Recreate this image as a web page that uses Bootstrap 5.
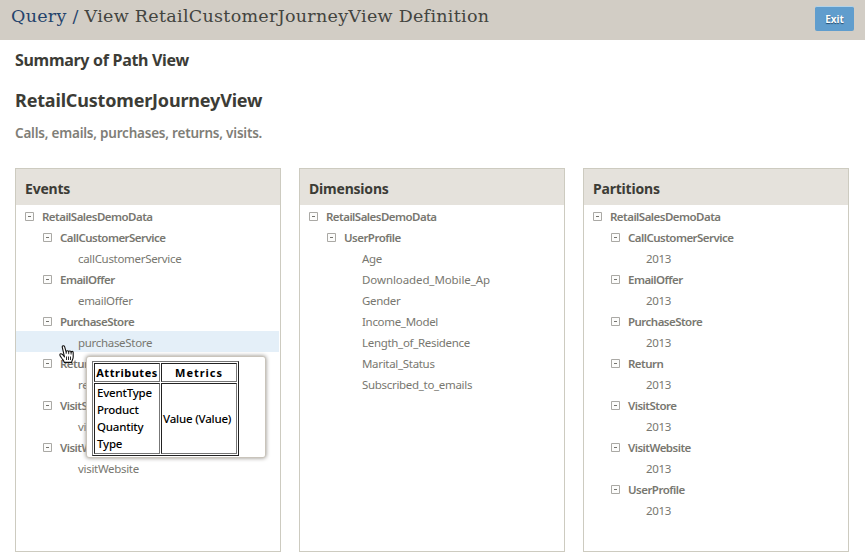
<!DOCTYPE html>
<html lang="en">
<head>
<meta charset="utf-8">
<meta name="viewport" content="width=device-width, initial-scale=1">
<title>View RetailCustomerJourneyView Definition</title>
<link href="https://cdn.jsdelivr.net/npm/bootstrap@5.3.0/dist/css/bootstrap.min.css" rel="stylesheet">
<style>
body{font-family:"Noto Sans","Open Sans",sans-serif;color:#3c3c36;overflow:hidden}
.topbar{height:40px;background:#d2cdc5;padding:0 11px}
.crumb-title{font:400 17.5px/32px "DejaVu Serif",serif;letter-spacing:.29px;color:#43443f;white-space:nowrap}
.crumb-title a,.crumb-title .sep{color:#24436c}
.btn-exit{width:39px;height:25px;margin-top:6px;padding:0;border:0;border-radius:2px;background:#609dcd;border-top:1px solid #b4d3e8;color:#fff;font-size:10px;line-height:23px;font-weight:700;letter-spacing:-.1px;text-shadow:0 1px 1px #244a6b}
.btn-exit:hover{background:#4f8cbc;color:#fff}
.page-body{padding:0 16px 0 15px}
.summary{font-size:16px;line-height:20px;font-weight:700;letter-spacing:-.3px;padding-top:10px}
.view-name{font-size:18px;line-height:24px;font-weight:700;letter-spacing:-.18px;padding-top:18px}
.view-desc{font-size:13.5px;line-height:20px;font-weight:600;letter-spacing:-.22px;color:#7f7e77;padding-top:11px;margin-bottom:25px}
.panels{gap:18px}
.panel{flex:0 0 266px;height:384px;border:1px solid #cdcbc0;border-radius:0}
.panel-head{height:36px;line-height:40px;background:#e5e2dc;border:0;border-radius:0!important;padding:0 9px;font-size:14px;font-weight:700;letter-spacing:-.2px}
.tree-row{height:21px;line-height:24px;font-size:11.5px;color:#787770;white-space:nowrap;padding-left:62px;letter-spacing:-.31px;margin-right:1px}
.tree-row.l0,.tree-row.l1{font-weight:600;letter-spacing:-.53px}
.tree-row.l0{padding-left:9px}
.tree-row.l1{padding-left:27px}
.tree-row.wide-text{letter-spacing:-.09px}
.tree-row.hovered{background:#e4eff8}
.toggle{width:9px;height:9px;margin:7px 8px 0 0;flex:none}
.tip{left:70px;top:187px;width:180px;height:102px;background:#fff;border:1px solid #c9c4bb;border-radius:3px;box-shadow:0 0 4px 0 #8f8b84;padding:4px 0 0 5px;z-index:2;color:#000}
.tip table{width:147px;height:94px;border:1px solid #777;border-right-color:#222;border-bottom-color:#222;border-collapse:separate;border-spacing:1px;table-layout:fixed}
.tip th,.tip td{border:1px solid #222;border-right-color:#777;border-bottom-color:#777;font-size:11.5px;line-height:17px;padding:0}
.tip th{height:19px;text-align:center;letter-spacing:.95px;font-size:11px;font-weight:700;white-space:nowrap}
.tip th:first-child{width:66px;letter-spacing:.52px}
.tip td{font-weight:500;letter-spacing:-.2px;padding:0 0 1px 2px;vertical-align:middle;white-space:nowrap}
.tip td+td{padding-left:1px}
.hand{left:43px;top:176px;width:16px;height:18px;z-index:3}
</style>
</head>
<body class="bg-white">
<svg class="d-none">
<symbol id="minus" viewBox="0 0 9 9"><path d="M.5.5h8v8h-8z" fill="#fcfcfb" stroke="#aaa9a5"/><path d="M3 4.5h3" stroke="#75746f"/></symbol>
</svg>
<header class="topbar d-flex justify-content-between align-items-start">
<h1 class="crumb-title m-0"><a class="text-decoration-none" href="#">Query</a> <span class="sep">/</span> View RetailCustomerJourneyView Definition</h1>
<button class="btn btn-exit" type="button">Exit</button>
</header>
<main class="page-body">
<h2 class="summary m-0">Summary of Path View</h2>
<h3 class="view-name m-0">RetailCustomerJourneyView</h3>
<p class="view-desc">Calls, emails, purchases, returns, visits.</p>
<div class="panels d-flex">
<section class="card panel">
<div class="card-header panel-head">Events</div>
<div class="tree-row l0 d-flex"><svg class="toggle"><use href="#minus"/></svg>RetailSalesDemoData</div>
<div class="tree-row l1 d-flex"><svg class="toggle"><use href="#minus"/></svg>CallCustomerService</div>
<div class="tree-row">callCustomerService</div>
<div class="tree-row l1 d-flex"><svg class="toggle"><use href="#minus"/></svg>EmailOffer</div>
<div class="tree-row">emailOffer</div>
<div class="tree-row l1 d-flex"><svg class="toggle"><use href="#minus"/></svg>PurchaseStore</div>
<div class="tree-row hovered">purchaseStore</div>
<div class="tree-row l1 d-flex"><svg class="toggle"><use href="#minus"/></svg>Return</div>
<div class="tree-row">return</div>
<div class="tree-row l1 d-flex"><svg class="toggle"><use href="#minus"/></svg>VisitStore</div>
<div class="tree-row">visitStore</div>
<div class="tree-row l1 d-flex"><svg class="toggle"><use href="#minus"/></svg>VisitWebsite</div>
<div class="tree-row">visitWebsite</div>
<div class="tip position-absolute">
<table>
<tr><th>Attributes</th><th>Metrics</th></tr>
<tr><td>EventType<br>Product<br>Quantity<br>Type</td><td>Value (Value)</td></tr>
</table>
</div>
<svg class="hand position-absolute" viewBox="0 0 16 18"><path d="M5.500 12 3.500 9.500C2.300 8.300.8 8.600.8 9.900c.2 1.200 1.500 2.500 2.500 4.100.8 1.200 1.700 1.800 1.900 3.400h7.500c0-1.800 1.500-3 1.500-5.400V7.500c0-1.500-2-1.500-2.100-.1 0-1.900-2.400-1.900-2.400-.3 0-1.800-2.500-1.700-2.600-.2L5.600 1.700C5 .1 2.900.7 3.300 2.300z" fill="#fff" stroke="#111" stroke-width="1.100" stroke-linejoin="round"/><path d="M7.200 6.800v2M9.700 7.200v2M12.100 7.500v2M7.500 11.500v3.500M9.500 11.500v3.500M11.500 11.500v3.500" stroke="#111" stroke-width=".9"/></svg>
</section>
<section class="card panel">
<div class="card-header panel-head">Dimensions</div>
<div class="tree-row l0 d-flex"><svg class="toggle"><use href="#minus"/></svg>RetailSalesDemoData</div>
<div class="tree-row l1 d-flex"><svg class="toggle"><use href="#minus"/></svg>UserProfile</div>
<div class="tree-row">Age</div>
<div class="tree-row wide-text">Downloaded_Mobile_Ap</div>
<div class="tree-row">Gender</div>
<div class="tree-row">Income_Model</div>
<div class="tree-row">Length_of_Residence</div>
<div class="tree-row">Marital_Status</div>
<div class="tree-row">Subscribed_to_emails</div>
</section>
<section class="card panel">
<div class="card-header panel-head">Partitions</div>
<div class="tree-row l0 d-flex"><svg class="toggle"><use href="#minus"/></svg>RetailSalesDemoData</div>
<div class="tree-row l1 d-flex"><svg class="toggle"><use href="#minus"/></svg>CallCustomerService</div>
<div class="tree-row">2013</div>
<div class="tree-row l1 d-flex"><svg class="toggle"><use href="#minus"/></svg>EmailOffer</div>
<div class="tree-row">2013</div>
<div class="tree-row l1 d-flex"><svg class="toggle"><use href="#minus"/></svg>PurchaseStore</div>
<div class="tree-row">2013</div>
<div class="tree-row l1 d-flex"><svg class="toggle"><use href="#minus"/></svg>Return</div>
<div class="tree-row">2013</div>
<div class="tree-row l1 d-flex"><svg class="toggle"><use href="#minus"/></svg>VisitStore</div>
<div class="tree-row">2013</div>
<div class="tree-row l1 d-flex"><svg class="toggle"><use href="#minus"/></svg>VisitWebsite</div>
<div class="tree-row">2013</div>
<div class="tree-row l1 d-flex"><svg class="toggle"><use href="#minus"/></svg>UserProfile</div>
<div class="tree-row">2013</div>
</section>
</div>
</main>
<script src="https://cdn.jsdelivr.net/npm/bootstrap@5.3.0/dist/js/bootstrap.bundle.min.js"></script>
</body>
</html>
